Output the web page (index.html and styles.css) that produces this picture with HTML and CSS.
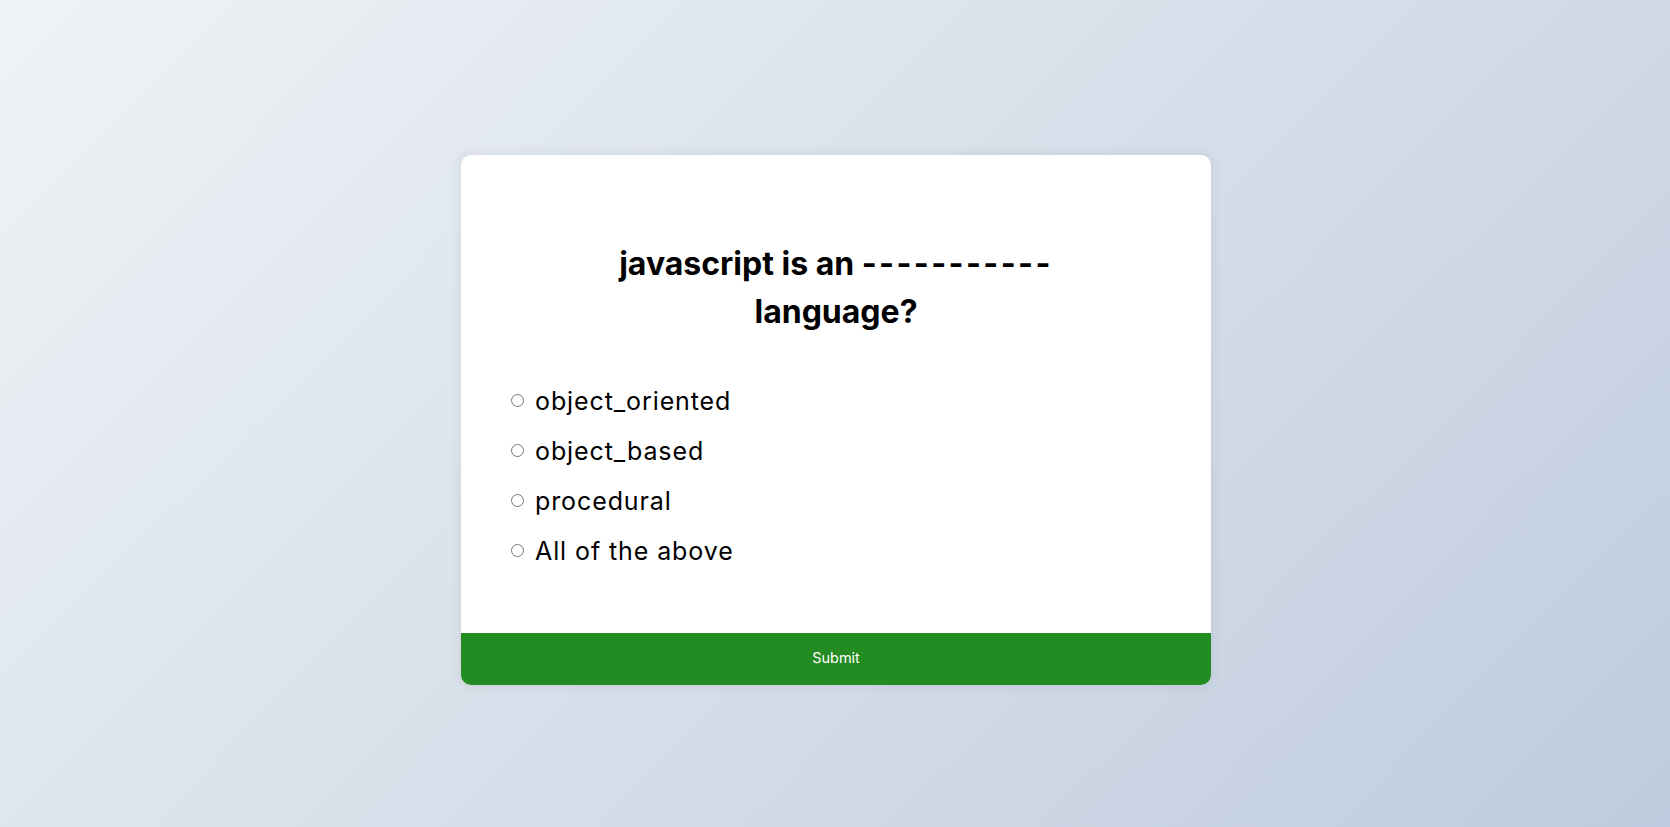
FILE: index.html
```html
<!DOCTYPE html>
<html lang="en">
<head>
<meta charset="UTF-8">
<title>Quiz</title>
<link rel="stylesheet" href="styles.css">
</head>
<body>
<div class="quiz">
  <div class="quiz-header">
    <h2 class="question">javascript is an <span class="blank">-----------</span> language?</h2>
    <ul class="answers">
      <li class="answer"><input type="radio" name="answer" id="a" class="radio"><label for="a">object_oriented</label></li>
      <li class="answer"><input type="radio" name="answer" id="b" class="radio"><label for="b">object_based</label></li>
      <li class="answer"><input type="radio" name="answer" id="c" class="radio"><label for="c">procedural</label></li>
      <li class="answer"><input type="radio" name="answer" id="d" class="radio"><label for="d">All of the above</label></li>
    </ul>
  </div>
  <button class="submit">Submit</button>
</div>
</body>
</html>
```
FILE: styles.css
```css
* { box-sizing: border-box; }
body {
  margin: 0;
  min-height: 100vh;
  padding: 12px 0 0 2px;
  display: flex;
  align-items: center;
  justify-content: center;
  font-family: Inter, "Noto Sans", sans-serif;
  background: linear-gradient(135deg, #eff3f6 0%, #bfcbde 100%);
}
.quiz {
  width: 750px;
  background: #fff;
  border-radius: 10px;
  box-shadow: 0 0 10px 2px rgba(100, 100, 100, 0.1);
  overflow: hidden;
}
.quiz-header {
  padding: 85px 50px 65px;
}
.question {
  margin: 0 auto 48px;
  max-width: 500px;
  text-align: center;
  font-size: 32px;
  line-height: 48px;
  font-weight: 700;
  color: #000;
}
.blank {
  letter-spacing: 2.4px;
}
.answers {
  list-style: none;
  margin: 0;
  padding: 0;
}
.answer {
  display: flex;
  align-items: center;
  height: 34px;
  font-size: 25px;
  letter-spacing: 0.9px;
  color: #000;
}
.answer + .answer { margin-top: 16px; }
.radio {
  width: 13px;
  height: 13px;
  margin: 0 11px 0 0;
}
.submit {
  display: block;
  width: 100%;
  height: 52px;
  padding: 0 0 2px;
  border: none;
  background: #228b22;
  color: #fff;
  font-family: Inter, sans-serif;
  font-size: 14.5px;
  cursor: pointer;
}
```
